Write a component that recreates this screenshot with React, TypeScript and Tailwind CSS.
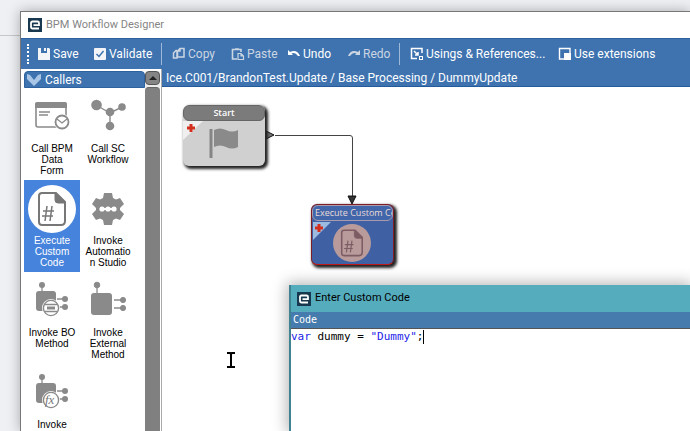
import React, { useState } from 'react';
import { clsx } from 'clsx';

type IconName = 'form' | 'workflow' | 'code' | 'gear' | 'bo' | 'external' | 'function';

const CALLERS: { icon: IconName; label: string[] }[] = [
  { icon: 'form', label: ['Call BPM', 'Data', 'Form'] },
  { icon: 'workflow', label: ['Call SC', 'Workflow'] },
  { icon: 'code', label: ['Execute', 'Custom', 'Code'] },
  { icon: 'gear', label: ['Invoke', 'Automatio', 'n Studio'] },
  { icon: 'bo', label: ['Invoke BO', 'Method'] },
  { icon: 'external', label: ['Invoke', 'External', 'Method'] },
  { icon: 'function', label: ['Invoke'] },
];

const Logo = () => (
  <svg className="h-3.5 w-3.5 shrink-0" viewBox="0 0 14 14" fill="none">
    <rect width="14" height="14" fill="#17384f" />
    <path d="M11 10.5H4.5Q3 10.5 3 9V5Q3 3.5 4.5 3.5H9.5Q11 3.5 11 5V7.2H5.5" stroke="#fff" strokeWidth="1.8" />
  </svg>
);

// Document with a hash sign, shared by the palette and the canvas node
const CodeDoc = ({ stroke }: { stroke: string }) => (
  <g fill="none" stroke={stroke}>
    <path d="M14 8H28L37 17V36Q37 40 33 40H14Q11 40 11 37V11Q11 8 14 8Z" strokeWidth="2" />
    <path d="M27 8V15Q27 18 30 18H37Z" fill={stroke} strokeWidth="1" />
    <path d="M19 21L17 36M24 21L22 36M15 26H26M14 31H25" strokeWidth="1.5" />
  </g>
);

const Connector = () => (
  <g fill="#8a8a8a" stroke="#8a8a8a">
    <path d="M14 8V15M29 22H38M29 30H38" strokeWidth="1.3" />
    <circle cx="14" cy="8" r="3" stroke="none" />
    <circle cx="37" cy="22" r="3" stroke="none" />
    <circle cx="37" cy="30" r="3" stroke="none" />
  </g>
);

const CallerIcon = ({ name }: { name: IconName }) => (
  <svg className="h-12 w-12" viewBox="0 0 48 48" fill="none">
    {name === 'form' && (
      <>
        <rect x="8" y="10" width="30" height="24" rx="2" stroke="#8a8a8a" strokeWidth="1.6" />
        <path d="M7 15V11Q7 9 9 9H37Q39 9 39 11V15Z" fill="#8a8a8a" />
        <path d="M11 19H22M11 22H20" stroke="#8a8a8a" strokeWidth="1.3" />
        <circle cx="34" cy="29" r="8" fill="#fff" />
        <circle cx="34" cy="29" r="6.5" stroke="#8a8a8a" strokeWidth="1.8" />
        <path d="M29 26L34 30L39 26" stroke="#8a8a8a" strokeWidth="1.3" />
      </>
    )}
    {name === 'workflow' && (
      <>
        <path d="M12 12L26 20L38 14M26 20V33" stroke="#8a8a8a" strokeWidth="1.4" />
        <circle cx="12.5" cy="12" r="5.3" fill="#8a8a8a" />
        <circle cx="26" cy="19" r="4.3" fill="#8a8a8a" />
        <circle cx="38" cy="14" r="3.8" fill="#8a8a8a" />
        <circle cx="26" cy="33" r="4.3" fill="#8a8a8a" />
      </>
    )}
    {name === 'code' && (
      <>
        <circle cx="24" cy="24" r="24" fill="#fff" />
        <CodeDoc stroke="#777" />
      </>
    )}
    {name === 'gear' && (
      <>
        <path
          d="M20 8H28L29 13L32 14.5L36 13L40 19L36 23V25L40 29L36 35L32 33.500L29 35L28 40H20L19 35L16 33.500L12 35L8 29L12 25V23L8 19L12 13L16 14.5L19 13Z"
          fill="#8a8a8a"
        />
        <path d="M17 24H31" stroke="#fff" strokeWidth="2" />
        <circle cx="18" cy="24" r="2.6" fill="#fff" />
        <circle cx="24" cy="24" r="2.6" fill="#fff" />
        <circle cx="30" cy="24" r="2.6" fill="#fff" />
      </>
    )}
    {name === 'bo' && (
      <>
        <Connector />
        <rect x="8" y="14" width="20" height="20" rx="3" fill="#8a8a8a" />
        <circle cx="23" cy="31" r="9" fill="#fff" />
        <circle cx="23" cy="31" r="7.6" stroke="#8a8a8a" strokeWidth="1.4" />
        <path d="M16.5 27.5H29.5M16.5 34.5H29.5" stroke="#8a8a8a" strokeWidth="1.4" />
        <path d="M19 31H27" stroke="#8a8a8a" strokeWidth="3" />
      </>
    )}
    {name === 'external' && (
      <>
        <g fill="#8a8a8a" stroke="#8a8a8a">
          <path d="M13 8V16M30 23H39M30 31H39" strokeWidth="1.3" />
          <circle cx="13" cy="8" r="2.8" />
          <circle cx="39" cy="23" r="2.6" />
          <circle cx="39" cy="31" r="2.6" />
        </g>
        <rect x="7" y="16" width="21" height="22" rx="3" fill="#8a8a8a" />
      </>
    )}
    {name === 'function' && (
      <>
        <Connector />
        <rect x="8" y="14" width="20" height="20" rx="3" fill="#8a8a8a" />
        <circle cx="23" cy="31" r="9" fill="#fff" />
        <circle cx="23" cy="31" r="7.6" stroke="#8a8a8a" strokeWidth="1.4" />
        <text x="17" y="35" fill="#777" fontFamily="Liberation Serif, serif" fontStyle="italic" fontSize="13">
          fx
        </text>
      </>
    )}
  </svg>
);

interface ToolButtonProps {
  label: string;
  width: string;
  muted?: boolean;
  children: React.ReactNode;
}

const ToolButton: React.FC<ToolButtonProps> = ({ label, width, muted, children }) => (
  <button className={clsx('flex h-full shrink-0 items-center gap-0.5 whitespace-nowrap', width, muted ? 'text-[#ccd6e2]' : 'text-white')}>
    <svg className="h-3.5 w-3.5 shrink-0" viewBox="0 0 14 14" fill="none">
      {children}
    </svg>
    {label}
  </button>
);

const Divider = () => <div className="mr-2.5 h-[22px] w-px shrink-0 bg-[#9db8d8]" />;

const Toolbar = () => (
  <div className="flex h-[31px] shrink-0 items-center border-t border-[#2c62a0] bg-[#3e73b0] pl-1.5 font-[Roboto,sans-serif] text-[12px]">
    <div className="mr-2 h-5 shrink-0 border-l-2 border-dotted border-white" />
    <ToolButton label="Save" width="w-14">
      <path d="M1 1H4V6H10V1H12L13 2V13H1Z" fill="#f2f4f7" />
      <path d="M7 1H9V4H7Z" fill="#f2f4f7" />
    </ToolButton>
    <ToolButton label="Validate" width="w-[68px]">
      <rect x="1" y="1" width="12" height="12" rx="1" fill="#f2f4f7" />
      <path d="M3.5 7L6 9.5L10.5 4" stroke="#3e73b0" strokeWidth="1.5" />
    </ToolButton>
    <Divider />
    <ToolButton label="Copy" width="w-[59px]" muted>
      <path d="M5 4V11H1.5V6L4 3.5H5M5.5 4L8 1.5H12V10H5.5ZM8 1.5V4H5.5" stroke="currentColor" strokeWidth="1.5" />
    </ToolButton>
    <ToolButton label="Paste" width="w-14" muted>
      <path d="M6 12H1.5V2.5H10V5M4 2H8" stroke="currentColor" strokeWidth="1.6" />
      <path d="M7 6.5H10L12.5 9V12.5H7ZM10 6.5V9H12.5" stroke="currentColor" strokeWidth="1.2" />
    </ToolButton>
    <ToolButton label="Undo" width="w-[60px]">
      <path d="M1 3V8H6L4.5 6.5Q8 4.5 11 9H13Q10 2 3 5Z" fill="currentColor" />
    </ToolButton>
    <ToolButton label="Redo" width="w-[52px]" muted>
      <path d="M13 3V8H8L9.5 6.5Q6 4.5 3 9H1Q4 2 11 5Z" fill="currentColor" />
    </ToolButton>
    <Divider />
    <ToolButton label="Usings & References..." width="w-[148px]">
      <path d="M7 11.5H1.5V1.5H12V6M4 4L8 8M8 5V8H5" stroke="currentColor" strokeWidth="1.5" />
      <rect x="9.5" y="9.5" width="3" height="3" stroke="currentColor" />
    </ToolButton>
    <ToolButton label="Use extensions" width="w-[110px]">
      <path d="M6 12H1.5V1.5H12V6" stroke="currentColor" strokeWidth="1.4" />
      <rect x="6" y="6" width="7" height="7" fill="currentColor" />
    </ToolButton>
  </div>
);

const StartNode = () => (
  <div className="absolute top-[18px] left-[21px] w-[82px] overflow-hidden rounded-md bg-[#d0d0d0] shadow-[2px_2px_3px_1px_#222]">
    <div className="h-4 rounded-md border border-[#666] bg-[#7b7b7b] text-center text-[9px] leading-[14px] font-semibold text-white">Start</div>
    <svg className="block h-[45px] w-full" viewBox="0 0 82 45">
      <path d="M0 0H20L0 19Z" fill="#efefef" />
      <path d="M4 7H12M8 3V11" stroke="#d32f1f" strokeWidth="3" />
      <path d="M28 8V37" stroke="#858585" strokeWidth="3" />
      <path d="M31 9Q37 6 43 9T55 9V26Q49 29 43 26T31 26Z" fill="#8a8a8a" />
    </svg>
  </div>
);

const CodeNode = () => (
  <div className="absolute top-[117px] left-[149px] w-[83px] overflow-hidden rounded-md border border-[#7f1d27] border-b-[#c01818] bg-[#3f61a3] shadow-[2px_2px_3px_1px_#222]">
    <div className="h-4 overflow-hidden rounded-md border border-[#a99bae] bg-[#4166a9] px-0.5 text-[9px] leading-[14px] whitespace-nowrap text-[#eadbd9]">
      Execute Custom Code
    </div>
    <svg className="block h-[43px] w-full" viewBox="0 0 81 43">
      <path d="M1 1H19L1 19Z" fill="#9dbbe0" />
      <path d="M3 7H11M7 3V11" stroke="#d32f1f" strokeWidth="3" />
      <circle cx="40" cy="22" r="19" fill="#b99b9c" />
      <g transform="translate(21 3) scale(.79)">
        <CodeDoc stroke="#7d5c63" />
      </g>
    </svg>
  </div>
);

const CodeDialog = () => {
  const [code, setCode] = useState('var dummy = "Dummy";');
  const parts = code.split(/(\bvar\b|"[^"]*")/);

  return (
    <section className="absolute top-[285px] right-0 bottom-0 left-[289px] flex flex-col border-l-2 border-[#3f8292] bg-white shadow-[0_0_14px_2px_rgba(0,0,0,0.3)]">
      <header className="flex h-[27px] shrink-0 items-center gap-1 bg-[#55acbd] pl-1.5 font-[Roboto,sans-serif] text-[11px] text-black">
        <Logo />
        <h2>Enter Custom Code</h2>
      </header>
      <label htmlFor="code" className="h-4 shrink-0 bg-[#467bad] pl-0.5 font-['DejaVu_Sans_Mono',monospace] text-[10px] leading-4 text-white">
        Code
      </label>
      <div className="relative flex-1 border-t border-[#555] font-['DejaVu_Sans_Mono',monospace] text-[11px] leading-4">
        <pre aria-hidden="true" className="font-[inherit]">
          {parts.map((part, i) => (
            <span key={i} className={i % 2 ? 'text-[#2424e8]' : 'text-black'}>{part}</span>
          ))}
          <span className="inline-block h-3.5 w-px bg-black align-middle" />
        </pre>
        <textarea
          id="code"
          value={code}
          onChange={(e) => setCode(e.target.value)}
          spellCheck={false}
          className="absolute inset-0 resize-none bg-transparent text-transparent outline-none"
        />
      </div>
    </section>
  );
};

export default function App() {
  const [selected, setSelected] = useState(2);

  return (
    <div className="relative h-screen overflow-hidden bg-[#eef0f4] pt-[11px] pl-5 font-['Open_Sans','Noto_Sans',sans-serif]">
      <div className="absolute top-[35px] left-0 h-px w-5 bg-[#c5c7ca]" />

      <main className="relative flex h-full flex-col border-t border-l border-[#777] bg-white shadow-[0_0_12px_rgba(0,0,0,0.3)]">
        <header className="flex h-[26px] shrink-0 items-center gap-1 pl-[7px] font-[Roboto,sans-serif] text-[11px] text-[#858585]">
          <Logo />
          <h1>BPM Workflow Designer</h1>
        </header>
        <Toolbar />

        <div className="flex min-h-0 flex-1">
          {/* Palette */}
          <aside className="flex w-[141px] shrink-0 border-r border-[#aaa] bg-white pt-0.5 pr-px pl-[3px]">
            <div className="min-w-0 flex-1 overflow-hidden">
              <button className="flex h-[17px] w-full items-center gap-1 rounded-t-sm border border-[#2c62a0] bg-[#3e73b0] pl-0.5 font-[Roboto,sans-serif] text-[12px] text-white">
                <svg className="h-3 w-3.5" viewBox="0 0 14 12">
                  <path d="M0 0L3 1L7 6L11 1L14 0V5L7 12L0 5Z" fill="#a9c6e6" />
                </svg>
                Callers
              </button>
              <div className="grid grid-cols-[56px_56px]">
                {CALLERS.map(({ icon, label }, i) => (
                  <button
                    key={icon}
                    onClick={() => setSelected(i)}
                    className={clsx(
                      "flex h-[92px] flex-col items-center pt-[5px] font-['Liberation_Sans',Arial,sans-serif] text-[10px] leading-[11px]",
                      selected === i ? 'bg-[#4583dc] text-white' : 'text-black'
                    )}
                  >
                    <CallerIcon name={icon} />
                    <span className="pt-0.5">
                      {label.map((line) => (
                        <span key={line} className="block whitespace-nowrap">{line}</span>
                      ))}
                    </span>
                  </button>
                ))}
              </div>
            </div>
            <div className="flex w-[15px] flex-col bg-[#ededed]">
              <button aria-label="Scroll up" className="flex h-3.5 items-center justify-center rounded-sm border border-[#555] bg-[#858585]">
                <svg className="h-1 w-2" viewBox="0 0 8 4"><path d="M0 4L4 0L8 4Z" fill="#222" /></svg>
              </button>
              <div className="mt-0.5 flex-1 rounded-t-sm border-t border-[#666] bg-[#808080]" />
            </div>
          </aside>

          {/* Canvas */}
          <section className="flex min-w-0 flex-1 flex-col">
            <nav className="h-[18px] shrink-0 border-b border-[#235b9c] bg-[#3e73b0] pl-1 font-[Roboto,sans-serif] text-[12px] leading-[18px] whitespace-nowrap text-white">
              Ice.C001/BrandonTest.Update / Base Processing / DummyUpdate
            </nav>
            <div className="relative flex-1">
              <svg className="absolute inset-0 h-[130px] w-[230px]" viewBox="0 0 230 130" fill="none">
                <path d="M113 48.5H188Q190.5 48.5 190.5 51V112" stroke="#444" />
                <path d="M104 44L112 48L104 52Z" fill="#777" stroke="#111" />
                <path d="M186 109H194L190 117Z" fill="#333" stroke="#111" />
              </svg>
              <StartNode />
              <CodeNode />
              {/* Text cursor */}
              <svg className="absolute top-[265px] left-[65px] h-4 w-2" viewBox="0 0 8 16">
                <path d="M0 1H3L4 2L5 1H8M4 2V14M0 15H3L4 14L5 15H8" fill="none" stroke="#000" strokeWidth="2" />
              </svg>
            </div>
          </section>
        </div>
      </main>

      <CodeDialog />
    </div>
  );
}
